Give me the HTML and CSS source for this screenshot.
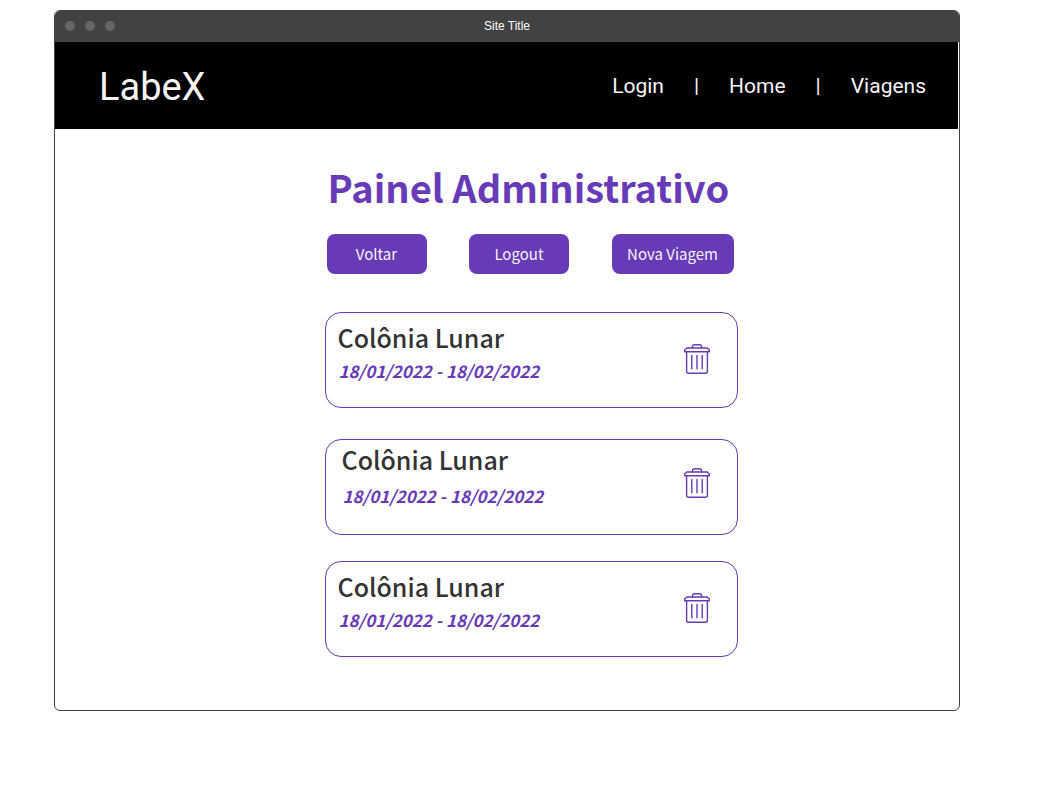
FILE: index.html
```html
<!DOCTYPE html>
<html lang="pt-BR">
<head>
<meta charset="utf-8">
<meta name="viewport" content="width=device-width, initial-scale=1">
<title>LabeX</title>
<link rel="stylesheet" href="styles.css">
</head>
<body>
<svg class="sprite" aria-hidden="true">
  <symbol id="trash" viewBox="0 0 26 30">
    <g fill="none" stroke="currentColor" stroke-width="1.4" stroke-linecap="round" stroke-linejoin="round">
      <path d="M8.5 4V2.8Q8.5 .8 10.5 .8h5Q17.500 .8 17.500 2.800V4"/>
      <path d="M3 4h20q.6 0 .8.700l1.500 1.100v1.900H.7V5.800l1.500-1.100Q2.400 4 3 4z"/>
      <path d="M2.600 7.800v19.400q0 2 2 2h16.800q2 0 2-2V7.800"/>
      <path d="M7.800 11.500v13.200M13 11.500v13.200M18.200 11.500v13.200"/>
    </g>
  </symbol>
</svg>
<div class="window">
  <div class="titlebar">
    <div class="dots"><span class="dot"></span><span class="dot"></span><span class="dot"></span></div>
    <span class="site-title">Site Title</span>
  </div>
  <header class="header">
    <a class="logo" href="#">LabeX</a>
    <nav class="nav">
      <a class="nav-link" href="#">Login</a>
      <span>|</span>
      <a class="nav-link" href="#">Home</a>
      <span>|</span>
      <a class="nav-link" href="#">Viagens</a>
    </nav>
  </header>
  <main class="main">
    <div class="panel">
      <h1 class="title">Painel Administrativo</h1>
      <div class="actions">
        <button class="button" type="button">Voltar</button>
        <button class="button" type="button">Logout</button>
        <button class="button button-wide" type="button">Nova Viagem</button>
      </div>
      <ul class="trips">
        <li class="card">
          <div><h2 class="trip-name">Colônia Lunar</h2><p class="trip-dates">18/01/2022 - 18/02/2022</p></div>
          <button class="delete" type="button" aria-label="Excluir viagem"><svg class="icon"><use href="#trash"/></svg></button>
        </li>
        <li class="card card-spread">
          <div><h2 class="trip-name">Colônia Lunar</h2><p class="trip-dates">18/01/2022 - 18/02/2022</p></div>
          <button class="delete" type="button" aria-label="Excluir viagem"><svg class="icon"><use href="#trash"/></svg></button>
        </li>
        <li class="card">
          <div><h2 class="trip-name">Colônia Lunar</h2><p class="trip-dates">18/01/2022 - 18/02/2022</p></div>
          <button class="delete" type="button" aria-label="Excluir viagem"><svg class="icon"><use href="#trash"/></svg></button>
        </li>
      </ul>
    </div>
  </main>
</div>
</body>
</html>
```
FILE: styles.css
```css
* { box-sizing: border-box; }

body {
  margin: 0;
  padding: 10px 83px 24px 54px;
  background: #fff;
  font-family: "Noto Sans CJK JP", "Noto Sans", sans-serif;
}

.sprite { position: absolute; width: 0; height: 0; }

.window {
  border: 1px solid #424242;
  border-radius: 6px;
  overflow: hidden;
}

.titlebar {
  display: grid;
  grid-template-columns: 1fr auto 1fr;
  align-items: center;
  height: 31px;
  padding: 0 10px 2px;
  background: #424242;
}

.dots { display: flex; gap: 10px; }

.dot {
  width: 10px;
  height: 10px;
  border-radius: 50%;
  background: #666;
}

.site-title {
  color: #fff;
  font: 12px/16px "Liberation Sans", Arial, sans-serif;
}

.header {
  display: flex;
  align-items: center;
  justify-content: space-between;
  height: 87px;
  margin-right: 1px;
  padding: 0 32px 0 44px;
  background: #000;
  color: #f5f5f5;
  font-family: Roboto, sans-serif;
}

.logo {
  padding-top: 3px;
  color: inherit;
  font-size: 38px;
  line-height: 44px;
  text-decoration: none;
}

.nav {
  display: flex;
  gap: 30px;
  font-size: 21px;
  line-height: 24px;
}

.nav-link { color: inherit; text-decoration: none; }

.main {
  display: flex;
  justify-content: center;
  padding: 30px 0 53px 48px;
}

.panel { width: 100%; max-width: 413px; }

.title {
  margin: 0;
  padding-left: 3px;
  color: #673ab7;
  font-size: 38px;
  line-height: 56px;
  font-weight: 700;
}

.actions {
  display: flex;
  justify-content: space-between;
  padding: 19px 4px 0 2px;
}

.button {
  width: 100px;
  height: 40px;
  padding: 0;
  border: 0;
  border-radius: 8px;
  background: #673ab7;
  color: #f5f5f5;
  font: inherit;
  font-size: 15px;
  line-height: 24px;
}

.button-wide { width: 122px; }

.trips {
  display: flex;
  flex-direction: column;
  gap: 26px;
  margin: 38px 0 0;
  padding: 0;
  list-style: none;
}

.card {
  display: flex;
  justify-content: space-between;
  height: 96px;
  padding: 6px 27px 0 12px;
  border: 1px solid #673ab7;
  border-radius: 16px;
}

.card-spread {
  margin-top: 5px;
  padding: 1px 27px 0 16px;
}

.trip-name {
  margin: 0;
  color: #333;
  font-size: 25px;
  line-height: 36px;
  font-weight: 500;
}

.trip-dates {
  margin: 2px 0 0;
  padding-left: 1px;
  color: #673ab7;
  font-size: 17px;
  line-height: 28px;
  font-style: italic;
  font-weight: 700;
}

.card-spread .trip-dates { margin-top: 5px; }

.delete {
  align-self: flex-start;
  margin-top: 25px;
  padding: 0;
  border: 0;
  background: none;
  color: #673ab7;
}

.card-spread .delete { margin-top: 27px; }

.icon { display: block; width: 26px; height: 30px; }
```
